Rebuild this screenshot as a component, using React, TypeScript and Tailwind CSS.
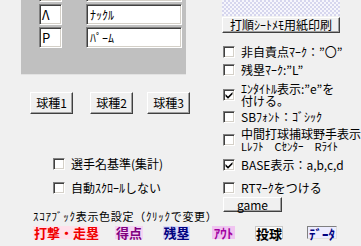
import React from 'react'

// Windows classic looking form: sunken boxes, raised buttons
const sunken =
  'bg-white border border-t-[#808080] border-l-[#808080] border-b-white border-r-white shadow-[inset_1px_1px_0_#404040,inset_-1px_-1px_0_#d4d0c8]'
const raised =
  'bg-[#f0f0f0] border border-t-white border-l-white border-b-[#404040] border-r-[#404040] shadow-[inset_-1px_-1px_0_#a0a0a0] flex items-center justify-center text-[12px] leading-none'

function Check({ checked = false }: { checked?: boolean }) {
  return (
    <div className={`w-[12px] h-[12px] shrink-0 flex items-center justify-center ${sunken}`}>
      {checked && (
        <svg width="8" height="8" viewBox="0 0 8 8">
          <path d="M0.5 3 L3 5.5 L7.5 1 L7.5 3.2 L3 7.7 L0.5 5.2 Z" fill="#000" />
        </svg>
      )}
    </div>
  )
}

function PanelRow({ mark, name }: { mark: string; name: string }) {
  return (
    <div className="flex h-[21px] shrink-0">
      <div className={`ml-[18px] w-[23px] h-full pl-[2px] text-[13px] leading-[19px] ${sunken}`}>{mark}</div>
      <div className={`ml-[24px] w-[96px] h-full pl-[3px] text-[12px] leading-[19px] ${sunken}`}>{name}</div>
    </div>
  )
}

function ColorTag({ label, className }: { label: string; className: string }) {
  return (
    <div className={`h-[13px] text-[13px] leading-[13px] font-bold text-center whitespace-nowrap shrink-0 ${className}`}>
      {label}
    </div>
  )
}

// two line label, tight line pitch like the original dialog
function TwoLines({ first, second, small = false }: { first: string; second: string; small?: boolean }) {
  return (
    <div className="flex flex-col">
      <span className="h-[12px] leading-[12px]">{first}</span>
      <span className={`h-[12px] leading-[12px] ${small ? 'text-[11px]' : ''}`}>{second}</span>
    </div>
  )
}

export default function App() {
  return (
    <div className="w-[361px] h-[246px] overflow-hidden bg-[#f0f0f0] text-black font-['Noto_Sans_CJK_JP',sans-serif] flex flex-col">
      <div className="flex h-[210px] shrink-0">
        {/* left column */}
        <div className="w-[222px] shrink-0 flex flex-col">
          <div className="ml-[21px] -mt-[24px] w-[165px] h-[99px] shrink-0 bg-[#c0c0c0] border-b border-[#e2e2e2] pt-[5px] flex flex-col gap-[2px]">
            <PanelRow mark="" name="" />
            <PanelRow mark="Λ" name="ﾅｯｸﾙ" />
            <PanelRow mark="P" name="ﾊﾟｰﾑ" />
          </div>

          <div className="mt-[17px] flex h-[22px]">
            <div className={`ml-[30px] w-[43px] ${raised}`}>球種1</div>
            <div className={`ml-[17px] w-[43px] ${raised}`}>球種2</div>
            <div className={`ml-[14px] w-[43px] ${raised}`}>球種3</div>
          </div>

          <div className="mt-[44px] ml-[53px] flex items-center gap-[6px] h-[12px] text-[12px] leading-[12px]">
            <Check />
            <span>選手名基準(集計)</span>
          </div>
          <div className="mt-[12px] ml-[53px] flex items-center gap-[6px] h-[12px] text-[12px] leading-[12px]">
            <Check />
            <span>自動ｽｸﾛｰﾙしない</span>
          </div>
        </div>

        {/* right column */}
        <div className="flex flex-col text-[12px]">
          <div className="w-[118px] h-[16px] shrink-0 bg-[repeating-conic-gradient(#d6d6ee_0_25%,#f6f6fc_0_50%)] bg-[length:4px_4px]" />
          <div className={`mt-[1px] w-[118px] h-[16px] shrink-0 ${raised}`}>打順ｼｰﾄﾒﾓ用紙印刷</div>

          <div className="mt-[12px] ml-[1px] h-[14px] flex items-center gap-[6px] leading-[14px] whitespace-nowrap">
            <Check />
            <span>非自責点ﾏｰｸ：”〇”</span>
          </div>
          <div className="mt-[4px] ml-[1px] h-[14px] flex items-center gap-[6px] leading-[14px] whitespace-nowrap">
            <Check />
            <span>残塁ﾏｰｸ:”L”</span>
          </div>
          <div className="mt-[6px] ml-[1px] h-[24px] flex items-center gap-[6px] whitespace-nowrap">
            <Check checked />
            <TwoLines first="ｴﾝﾀｲﾄﾙ表示:”e”を" second="付ける。" />
          </div>
          <div className="mt-[3px] ml-[1px] h-[14px] flex items-center gap-[6px] leading-[14px] whitespace-nowrap">
            <Check />
            <span>SBﾌｫﾝﾄ：ｺﾞｼｯｸ</span>
          </div>
          <div className="mt-[4px] ml-[1px] h-[24px] flex items-center gap-[6px] whitespace-nowrap">
            <Check />
            <TwoLines first="中間打球捕球野手表示" second="Lﾚﾌﾄ　Cｾﾝﾀｰ　Rﾗｲﾄ" small />
          </div>
          <div className="mt-[6px] ml-[1px] h-[14px] flex items-center gap-[6px] leading-[14px] whitespace-nowrap">
            <Check checked />
            <span>BASE表示：a,b,c,d</span>
          </div>
          <div className="mt-[9px] ml-[1px] h-[14px] flex items-center gap-[6px] leading-[14px] whitespace-nowrap">
            <Check />
            <span>RTﾏｰｸをつける</span>
          </div>
          <div className={`mt-[2px] ml-[1px] w-[59px] h-[15px] shrink-0 ${raised}`}>game</div>
        </div>
      </div>

      <div className="ml-[33px] h-[13px] text-[11px] leading-[13px] tracking-[0.7px] whitespace-nowrap">
        ｽｺｱﾌﾞｯｸ表示色設定（ｸﾘｯｸで変更）
      </div>

      <div className="mt-[3px] flex">
        <ColorTag label="打撃・走塁" className="ml-[33px] w-[67px] bg-[#ffe0ea] text-[#f00000]" />
        <ColorTag label="得点" className="ml-[15px] w-[28px] bg-[#f4d4f4] text-[#800080]" />
        <ColorTag label="残塁" className="ml-[20px] w-[27px] bg-[#d8d8f8] text-[#000080]" />
        <ColorTag label="ｱｳﾄ" className="ml-[22px] w-[23px] bg-[#f0c4f0] text-[#a000a0]" />
        <ColorTag label="投球" className="ml-[20px] w-[28px] bg-[#fafafa] text-black border border-[#c8c8c8] leading-[11px]" />
        <ColorTag label="ﾃﾞｰﾀ" className="ml-[24px] w-[30px] bg-[#ececff] text-[#000080] border border-t-[#808080] border-l-[#808080] border-b-[#e0e0e0] border-r-[#e0e0e0] leading-[11px]" />
      </div>
    </div>
  )
}
